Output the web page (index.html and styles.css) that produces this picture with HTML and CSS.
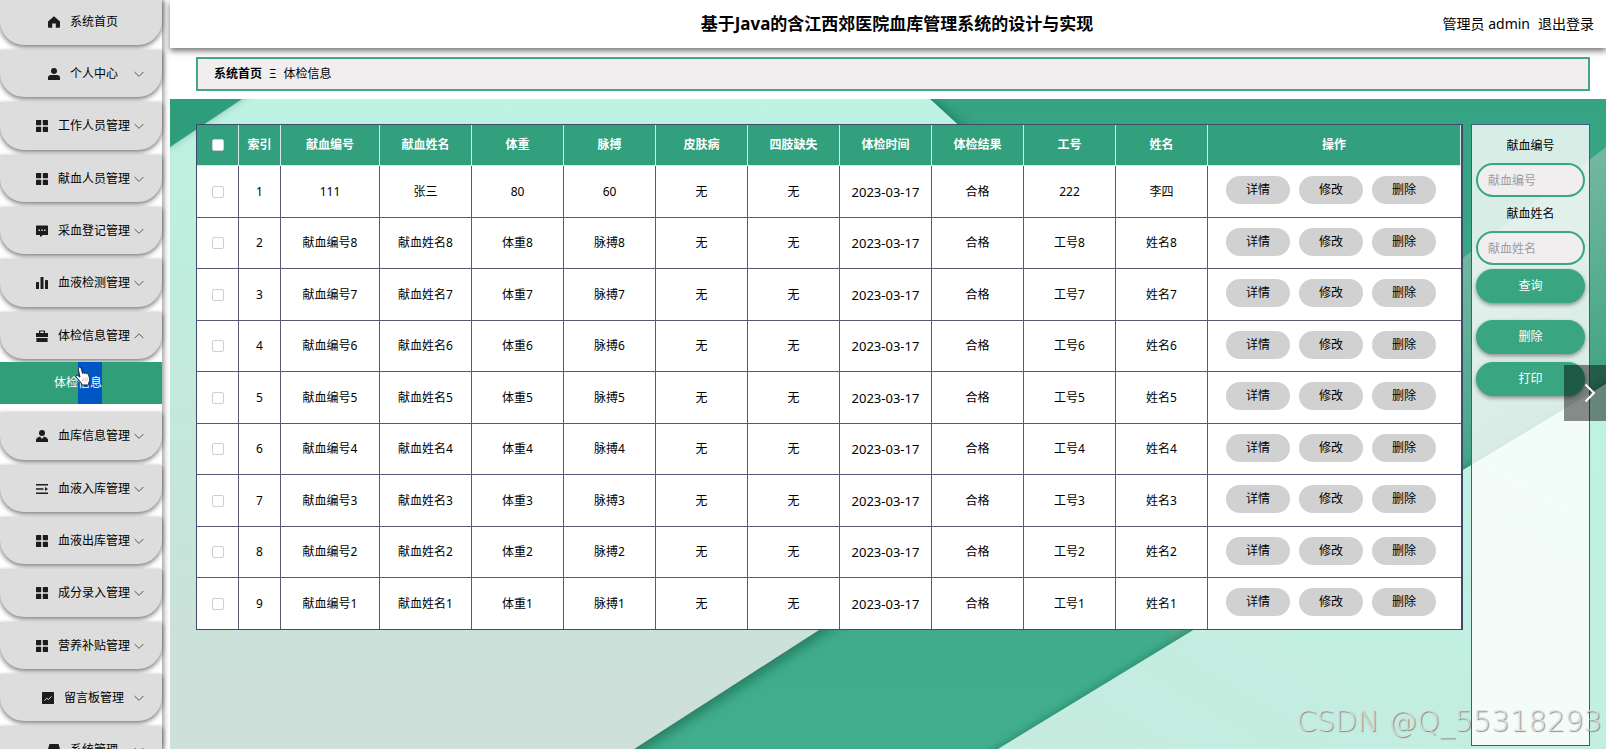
FILE: index.html
```html
<!DOCTYPE html>
<html lang="zh-CN">
<head>
<meta charset="utf-8">
<title>基于Java的含江西郊医院血库管理系统的设计与实现</title>
<link rel="stylesheet" href="styles.css">
</head>
<body>
<svg class="defs" aria-hidden="true">
  <symbol id="i-home" viewBox="0 0 12 12"><path d="M6 .3 12 5.4V11a.8.8 0 0 1-.8.8H7.8V7.4H4.2v4.4H.8A.8.8 0 0 1 0 11V5.4z"/></symbol>
  <symbol id="i-user" viewBox="0 0 12 12"><circle cx="6" cy="3" r="3"/><path d="M0 12V9.8Q0 7 3 7h6q3 0 3 2.800V12z"/></symbol>
  <symbol id="i-menu" viewBox="0 0 12 12"><rect width="5.200" height="5.200" rx=".6"/><rect x="6.800" width="5.200" height="5.200" rx=".6"/><rect y="6.800" width="5.200" height="5.200" rx=".6"/><rect x="6.800" y="6.800" width="5.200" height="5.200" rx=".6"/></symbol>
  <symbol id="i-chat" viewBox="0 0 12 12"><path fill-rule="evenodd" d="M.5.500h11a.5.5 0 0 1 .5.500v8.500a.5.5 0 0 1-.5.500H7L4 12v-2H.500a.5.5 0 0 1-.5-.5V1A.5.5 0 0 1 .5.500zM2.500 4.500v1.500h1.400V4.500zm2.800 0v1.500h1.400V4.500zm2.800 0v1.500h1.400V4.500z"/></symbol>
  <symbol id="i-bars" viewBox="0 0 12 12"><rect y="5" width="3" height="7" rx=".5"/><rect x="4.500" width="3" height="12" rx=".5"/><rect x="9" y="3" width="3" height="9" rx=".5"/></symbol>
  <symbol id="i-case" viewBox="0 0 12 12"><path d="M3 3V.500h6V3h3v4H0V3zm1.200 0h3.600V1.600H4.200zM.4 8h11.200v4H.4z" fill-rule="evenodd"/></symbol>
  <symbol id="i-person" viewBox="0 0 12 12"><circle cx="6" cy="3" r="3"/><path d="M0 12V9.500Q.4 7.500 4 6.500L6 9l2-2.500q3.600 1 4 3V12z"/></symbol>
  <symbol id="i-lines" viewBox="0 0 12 12"><path d="M0 1h12v1.500H0zM0 5.200h7.500v1.500H0zM0 9.500h12V11H0zM9 4l3 2-3 2z"/></symbol>
  <symbol id="i-trend" viewBox="0 0 12 12"><rect width="12" height="12" rx=".6"/><path d="m2.500 8.500 2.300-2.200 1.700 1.200 3-3.200" fill="none" stroke="#ddd"/></symbol>
  <symbol id="i-drawer" viewBox="0 0 12 12"><path d="M1.500 0h9L12 5v7H0V5z"/></symbol>
  <symbol id="i-down" viewBox="0 0 10 10"><path d="m.6 3 4.400 4.400L9.400 3" fill="none" stroke="#555"/></symbol>
  <symbol id="i-up" viewBox="0 0 10 10"><path d="M.6 7.200 5 2.800l4.400 4.400" fill="none" stroke="#555"/></symbol>
</svg>
<div class="app">
  <nav class="sidebar">
    <a class="item" href="#"><svg class="icon"><use href="#i-home"/></svg>系统首页</a>
    <a class="item" href="#"><svg class="icon"><use href="#i-user"/></svg>个人中心<svg class="arrow"><use href="#i-down"/></svg></a>
    <a class="item" href="#"><svg class="icon"><use href="#i-menu"/></svg>工作人员管理<svg class="arrow"><use href="#i-down"/></svg></a>
    <a class="item" href="#"><svg class="icon"><use href="#i-menu"/></svg>献血人员管理<svg class="arrow"><use href="#i-down"/></svg></a>
    <a class="item" href="#"><svg class="icon"><use href="#i-chat"/></svg>采血登记管理<svg class="arrow"><use href="#i-down"/></svg></a>
    <a class="item" href="#"><svg class="icon"><use href="#i-bars"/></svg>血液检测管理<svg class="arrow"><use href="#i-down"/></svg></a>
    <a class="item" href="#"><svg class="icon"><use href="#i-case"/></svg>体检信息管理<svg class="arrow"><use href="#i-up"/></svg></a>
    <a class="subitem" href="#">体检<span class="selected">信息</span>
      <svg class="cursor" viewBox="0 0 15 19"><path d="M3.300 1.500Q4.500.300 5.600 1.700L7 7q.8-1 1.800.1 1.200-.8 2 .3 1.500-.6 2 .8l1 4q.3 2-.8 3.500l-.3 2.300H7L3.400 13 .8 10.400Q.5 8.800 2 8.900l2.600 1.600L3 3z" fill="#fff" stroke="#222" stroke-width=".9"/><path d="M7.600 11v3.500M9.500 11v3.500M11.400 11v3.500" stroke="#777" stroke-width=".4"/></svg>
    </a>
    <a class="item" href="#"><svg class="icon"><use href="#i-person"/></svg>血库信息管理<svg class="arrow"><use href="#i-down"/></svg></a>
    <a class="item" href="#"><svg class="icon"><use href="#i-lines"/></svg>血液入库管理<svg class="arrow"><use href="#i-down"/></svg></a>
    <a class="item" href="#"><svg class="icon"><use href="#i-menu"/></svg>血液出库管理<svg class="arrow"><use href="#i-down"/></svg></a>
    <a class="item" href="#"><svg class="icon"><use href="#i-menu"/></svg>成分录入管理<svg class="arrow"><use href="#i-down"/></svg></a>
    <a class="item" href="#"><svg class="icon"><use href="#i-menu"/></svg>营养补贴管理<svg class="arrow"><use href="#i-down"/></svg></a>
    <a class="item" href="#"><svg class="icon"><use href="#i-trend"/></svg>留言板管理<svg class="arrow"><use href="#i-down"/></svg></a>
    <a class="item" href="#"><svg class="icon"><use href="#i-drawer"/></svg>系统管理<svg class="arrow"><use href="#i-down"/></svg></a>
  </nav>
  <div class="page">
    <header class="header">
      <h1 class="title">基于Java的含江西郊医院血库管理系统的设计与实现</h1>
      <div class="account"><span>管理员 admin</span><a class="logout" href="#">退出登录</a></div>
    </header>
    <div class="crumbs"><a class="crumb-home" href="#">系统首页</a><span class="crumb-sep">Ξ</span><span>体检信息</span></div>
    <main class="content">
      <svg class="backdrop" viewBox="0 0 1436 650" preserveAspectRatio="none" aria-hidden="true">
        <defs>
          <linearGradient id="mint" x1="0" y1="0" x2="0" y2="1"><stop offset="0" stop-color="#bef3e3"/><stop offset=".3" stop-color="#bfeddd"/><stop offset=".8" stop-color="#cbe1d9"/><stop offset="1" stop-color="#cfe0d9"/></linearGradient>
          <linearGradient id="green" x1="0" y1="0" x2="0" y2="1"><stop offset="0" stop-color="#36a382"/><stop offset="1" stop-color="#42ae8e"/></linearGradient>
          <linearGradient id="pane" gradientUnits="userSpaceOnUse" x1="1293" y1="159" x2="1403" y2="309"><stop offset="0" stop-color="#72b7a0"/><stop offset="1" stop-color="#41a384"/></linearGradient>
          <linearGradient id="corner" x1="1" y1="0" x2="0" y2="1"><stop offset="0" stop-color="#bdf3e2"/><stop offset="1" stop-color="#c7eadf"/></linearGradient>
          <filter id="soft" x="-10%" y="-10%" width="120%" height="120%"><feDropShadow dx="3" dy="3" stdDeviation="7" flood-color="#0b5a40" flood-opacity=".7"/></filter>
          <filter id="faint" x="-10%" y="-10%" width="120%" height="120%"><feDropShadow dx="-1" dy="-1" stdDeviation="4" flood-color="#0b5a40" flood-opacity=".45"/></filter>
        </defs>
        <rect width="1436" height="650" fill="url(#green)"/>
        <path d="M1436 48 1293 159 1000 400V660L1436 400z" fill="url(#pane)"/>
        <path d="M-40 -40H700L760 0 1054 270 464 650 430 690H-40z" fill="url(#mint)" filter="url(#soft)"/>
        <path d="M1456 273 1293 371 1025 530 828 650 760 690H1456z" fill="url(#corner)" filter="url(#faint)"/>
        <path d="M-20-20H100L72 0 0 48-20 60z" fill="#2f9d7b" filter="url(#faint)"/>
      </svg>
      <table class="grid">
        <colgroup><col class="c-tick"><col class="c-index"><col class="c-code"><col class="c-std" span="9"><col></colgroup>
        <thead>
          <tr><th><input type="checkbox" class="tick" aria-label="全选"></th><th>索引</th><th>献血编号</th><th>献血姓名</th><th>体重</th><th>脉搏</th><th>皮肤病</th><th>四肢缺失</th><th>体检时间</th><th>体检结果</th><th>工号</th><th>姓名</th><th>操作</th></tr>
        </thead>
        <tbody>
          <tr><td><input type="checkbox" class="tick" aria-label="选择 1"></td><td>1</td><td>111</td><td>张三</td><td>80</td><td>60</td><td>无</td><td>无</td><td class="date">2023-03-17</td><td>合格</td><td>222</td><td>李四</td><td class="ops"><button class="op">详情</button><button class="op">修改</button><button class="op">删除</button></td></tr>
          <tr><td><input type="checkbox" class="tick" aria-label="选择 2"></td><td>2</td><td>献血编号8</td><td>献血姓名8</td><td>体重8</td><td>脉搏8</td><td>无</td><td>无</td><td class="date">2023-03-17</td><td>合格</td><td>工号8</td><td>姓名8</td><td class="ops"><button class="op">详情</button><button class="op">修改</button><button class="op">删除</button></td></tr>
          <tr><td><input type="checkbox" class="tick" aria-label="选择 3"></td><td>3</td><td>献血编号7</td><td>献血姓名7</td><td>体重7</td><td>脉搏7</td><td>无</td><td>无</td><td class="date">2023-03-17</td><td>合格</td><td>工号7</td><td>姓名7</td><td class="ops"><button class="op">详情</button><button class="op">修改</button><button class="op">删除</button></td></tr>
          <tr><td><input type="checkbox" class="tick" aria-label="选择 4"></td><td>4</td><td>献血编号6</td><td>献血姓名6</td><td>体重6</td><td>脉搏6</td><td>无</td><td>无</td><td class="date">2023-03-17</td><td>合格</td><td>工号6</td><td>姓名6</td><td class="ops"><button class="op">详情</button><button class="op">修改</button><button class="op">删除</button></td></tr>
          <tr><td><input type="checkbox" class="tick" aria-label="选择 5"></td><td>5</td><td>献血编号5</td><td>献血姓名5</td><td>体重5</td><td>脉搏5</td><td>无</td><td>无</td><td class="date">2023-03-17</td><td>合格</td><td>工号5</td><td>姓名5</td><td class="ops"><button class="op">详情</button><button class="op">修改</button><button class="op">删除</button></td></tr>
          <tr><td><input type="checkbox" class="tick" aria-label="选择 6"></td><td>6</td><td>献血编号4</td><td>献血姓名4</td><td>体重4</td><td>脉搏4</td><td>无</td><td>无</td><td class="date">2023-03-17</td><td>合格</td><td>工号4</td><td>姓名4</td><td class="ops"><button class="op">详情</button><button class="op">修改</button><button class="op">删除</button></td></tr>
          <tr><td><input type="checkbox" class="tick" aria-label="选择 7"></td><td>7</td><td>献血编号3</td><td>献血姓名3</td><td>体重3</td><td>脉搏3</td><td>无</td><td>无</td><td class="date">2023-03-17</td><td>合格</td><td>工号3</td><td>姓名3</td><td class="ops"><button class="op">详情</button><button class="op">修改</button><button class="op">删除</button></td></tr>
          <tr><td><input type="checkbox" class="tick" aria-label="选择 8"></td><td>8</td><td>献血编号2</td><td>献血姓名2</td><td>体重2</td><td>脉搏2</td><td>无</td><td>无</td><td class="date">2023-03-17</td><td>合格</td><td>工号2</td><td>姓名2</td><td class="ops"><button class="op">详情</button><button class="op">修改</button><button class="op">删除</button></td></tr>
          <tr><td><input type="checkbox" class="tick" aria-label="选择 9"></td><td>9</td><td>献血编号1</td><td>献血姓名1</td><td>体重1</td><td>脉搏1</td><td>无</td><td>无</td><td class="date">2023-03-17</td><td>合格</td><td>工号1</td><td>姓名1</td><td class="ops"><button class="op">详情</button><button class="op">修改</button><button class="op">删除</button></td></tr>
        </tbody>
      </table>
      <form class="filters">
        <label class="field-label" for="code">献血编号</label>
        <input class="field" id="code" type="text" placeholder="献血编号">
        <label class="field-label" for="name">献血姓名</label>
        <input class="field" id="name" type="text" placeholder="献血姓名">
        <button class="action search" type="button">查询</button>
        <button class="action" type="button">删除</button>
        <button class="action" type="button">打印</button>
      </form>
    </main>
  </div>
</div>
<button class="next" aria-label="下一张"><svg class="next-icon" viewBox="0 0 12 20"><path d="m1.500 1.500 8.500 8.500-8.500 8.500" fill="none" stroke="#fff" stroke-width="2"/></svg></button>
<div class="watermark">CSDN @Q_55318293</div>
</body>
</html>
```
FILE: styles.css
```css
* { box-sizing: border-box; }
body {
  margin: 0;
  overflow: hidden;
  background: #fff;
  color: #000;
  font: 12px/20px "Noto Sans", "Noto Sans CJK SC", sans-serif;
}
a { color: inherit; text-decoration: none; }
button, input { font: inherit; margin: 0; }
.defs { position: absolute; width: 0; height: 0; }
.app { display: flex; gap: 8px; height: 100vh; }

.sidebar {
  flex: none;
  width: 162px;
  box-shadow: 2px 0 5px rgba(0, 0, 0, .4);
  overflow: clip;
  overflow-clip-margin: 8px;
}
.item {
  position: relative;
  display: flex;
  align-items: center;
  justify-content: center;
  height: 47px;
  margin-bottom: 5px;
  padding-left: 4px;
  background: #ddd;
  border-radius: 0 0 24px 24px;
  box-shadow: 0 2px 5px rgba(0, 0, 0, .55);
}
.item:nth-child(3n) { height: 48px; }
.item:first-child { margin-top: -2px; }
.icon { width: 12px; height: 12px; margin-right: 10px; fill: #1c1c1c; }
.arrow { position: absolute; right: 18px; width: 10px; height: 10px; }
.subitem {
  position: relative;
  display: flex;
  justify-content: center;
  margin: -2px 0 8px;
  padding-right: 6px;
  background: #319e7a;
  color: #fff;
  line-height: 42px;
}
.selected { background: #0055c4; }
.cursor { position: absolute; left: 75px; top: 4px; width: 16px; height: 20px; }

.page { flex: 1; min-width: 0; display: flex; flex-direction: column; }
.header {
  display: grid;
  grid-template-columns: 1fr auto 1fr;
  align-items: center;
  height: 48px;
  padding: 0 12px 0 30px;
  box-shadow: 0 3px 6px rgba(0, 0, 0, .55);
}
.title { grid-column: 2; margin: 0; font-size: 17px; line-height: 24px; }
.account { display: flex; justify-content: flex-end; gap: 8px; font-size: 14px; }
.crumbs {
  display: flex;
  align-items: center;
  gap: 7px;
  height: 34px;
  margin: 9px 16px 8px 26px;
  padding: 0 16px;
  background: #f0eeef;
  border: 2px solid #42a687;
}
.crumb-home { font-weight: bold; }

.content {
  position: relative;
  flex: 1;
  display: flex;
  align-items: flex-start;
  gap: 8px;
  padding: 25px 16px 3px 26px;
}
.backdrop { position: absolute; inset: 0; width: 100%; height: 100%; }
.grid {
  position: relative;
  flex: 1;
  table-layout: fixed;
  border-collapse: separate;
  border-spacing: 0;
  border: 1px solid #3c4a6b;
  border-right-width: 2px;
  text-align: center;
  background: #fff;
}
.c-tick, .c-index { width: 42px; }
.c-code { width: 99px; }
.c-std { width: 92px; }
.grid th, .grid td { padding: 0; border: 0 solid #5c5677; border-width: 0 1px 1px 0; }
.grid th { height: 41px; background: #329f7d; color: #fff; border-color: #d5eee5; }
.grid td { height: 51px; }
.grid tr:nth-child(odd) td { height: 52px; }
.grid td:last-child { border-right: 0; }
.grid tbody tr:last-child td { height: 51px; border-bottom: 0; }
.grid .date { font-size: 13px; }
.tick {
  appearance: none;
  display: block;
  width: 12px;
  height: 12px;
  margin: 0 auto;
  background: #fff;
  border: 1px solid #cdced6;
  border-radius: 2px;
}
.grid .ops { padding: 0 0 3px 18px; text-align: left; }
.op {
  width: 64px;
  height: 28px;
  margin-right: 9px;
  padding: 0;
  border: 0;
  border-radius: 14px;
  background: #d1d1d1;
  color: #000;
}

.filters {
  position: relative;
  align-self: stretch;
  display: flex;
  flex-direction: column;
  width: 119px;
  padding: 4px;
  background: rgba(255, 255, 255, .8);
  border: 1px solid #425b80;
  text-align: center;
}
.field-label { line-height: 34px; }
.field {
  width: 100%;
  height: 34px;
  padding: 0 10px;
  border: 2px solid #3ba683;
  border-radius: 17px;
  background: #f0eeef;
}
.field::placeholder { color: #999da3; }
.action {
  height: 34px;
  margin-bottom: 8px;
  border: 0;
  border-radius: 17px;
  background: #39a581;
  color: #fff;
  box-shadow: 0 2px 4px rgba(0, 0, 0, .4);
}
.search { margin: 4px 0 17px; }

.next {
  position: absolute;
  right: 0;
  top: 365px;
  display: flex;
  align-items: center;
  justify-content: flex-end;
  width: 42px;
  height: 56px;
  padding: 0 10px;
  border: 0;
  background: rgba(0, 0, 0, .45);
}
.next-icon { width: 12px; height: 20px; }
.watermark {
  position: absolute;
  right: 4px;
  bottom: 8px;
  font: 200 29px/40px "DejaVu Sans", sans-serif;
  color: rgba(225, 225, 225, .9);
  text-shadow: 1px 1px 1px rgba(90, 90, 90, .7);
}
```
